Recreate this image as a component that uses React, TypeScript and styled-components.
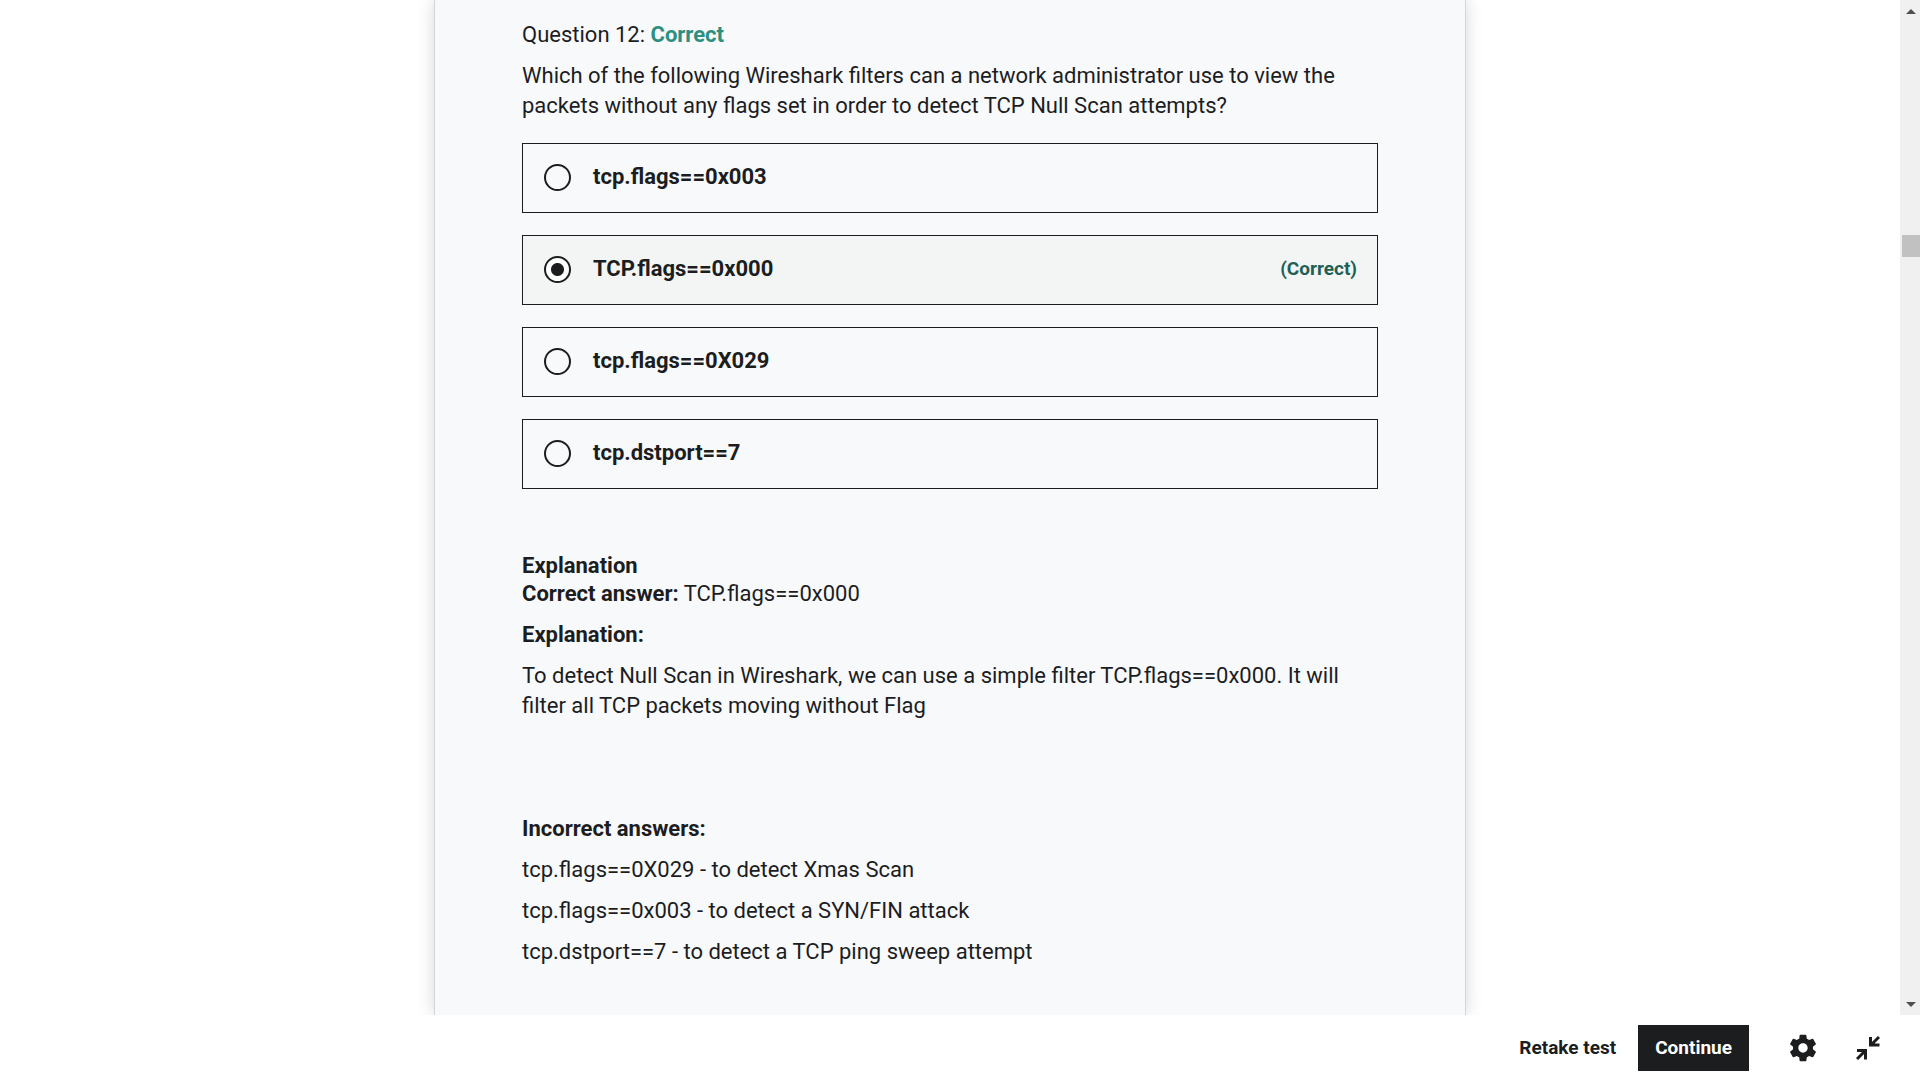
import React, { useState } from "react";
import styled, { createGlobalStyle } from "styled-components";

const ink = "#1c1d1f";

const GlobalStyle = createGlobalStyle`
  *, *::before, *::after { box-sizing: border-box; }
  body { margin: 0; background: #fff; color: ${ink}; font-family: Roboto, "Liberation Sans", sans-serif; }
  button { font: inherit; border: 0; background: none; padding: 0; cursor: pointer; color: inherit; }
`;

const Page = styled.div`
  height: 100vh;
  display: flex;
  flex-direction: column;
`;

const Viewport = styled.div`
  flex: 1;
  min-height: 0;
  display: flex;
  overflow: hidden;
`;

const Content = styled.main`
  flex: 1;
  display: flex;
  justify-content: center;
  align-items: stretch;
`;

const Sheet = styled.article`
  width: 100%;
  max-width: 1032px;
  padding: 20px 87px 0;
  background: #f8f9fb;
  border: solid #d1d7dc;
  border-width: 0 1px;
  box-shadow: 0 0 16px rgba(0, 0, 0, 0.16);
  font-size: 22px;
  line-height: 30px;
`;

const Paragraph = styled.p`
  margin: 0 0 11px;
`;

const Status = styled.strong`
  color: #2b9080;
`;

const Options = styled.fieldset`
  display: grid;
  gap: 22px;
  margin: 22px 0 64px;
  padding: 0;
  border: 0;
  min-width: 0;
`;

const Option = styled.label<{ $correct?: boolean }>`
  display: flex;
  align-items: center;
  gap: 22px;
  height: 70px;
  padding: 0 20px 2px 21px;
  border: 1px solid ${ink};
  background: ${(p) => (p.$correct ? "#f2f5f4" : "transparent")};
  font-weight: 700;
  cursor: pointer;
`;

const Radio = styled.input`
  appearance: none;
  flex: none;
  width: 27px;
  height: 27px;
  margin: 0;
  border: 2px solid ${ink};
  border-radius: 50%;
  &:checked { background: radial-gradient(circle, ${ink} 6px, #fff 7px); }
`;

const OptionText = styled.span`
  flex: 1;
`;

const Badge = styled.span`
  color: #1e6055;
  font-size: 19px;
`;

const Heading = styled.h2`
  margin: 0;
  font-size: inherit;
  line-height: 26px;
`;

const Incorrect = styled.section`
  margin-top: 93px;
`;

const ScrollRail = styled.aside`
  width: 20px;
  display: flex;
  flex-direction: column;
  background: #f0f0f0;
`;

const ScrollButton = styled.button`
  height: 22px;
  display: grid;
  place-items: center end;
`;

const Track = styled.div`
  flex: 1;
  display: flex;
  flex-direction: column;
  align-items: flex-end;
  padding-top: 213px;
`;

const Thumb = styled.div`
  width: 18px;
  height: 22px;
  background: #c1c1c1;
`;

const Footer = styled.footer`
  height: 65px;
  display: flex;
  align-items: center;
  justify-content: flex-end;
  padding-right: 40px;
  font-size: 19px;
  font-weight: 700;
`;

const Continue = styled.button`
  height: 46px;
  margin: 0 38px 0 22px;
  padding: 0 17px;
  background: ${ink};
  color: #fff;
`;

const IconButton = styled.button`
  display: grid;
  & + & { margin-left: 37px; }
`;

const options = ["tcp.flags==0x003", "TCP.flags==0x000", "tcp.flags==0X029", "tcp.dstport==7"];
const correct = 1;

export default function App() {
  const [picked, setPicked] = useState(correct);
  return (
    <Page>
      <GlobalStyle />
      <Viewport>
        <Content>
          <Sheet>
            <Paragraph>Question 12: <Status>Correct</Status></Paragraph>
            <Paragraph id="question">
              Which of the following Wireshark filters can a network administrator use to view the packets without any flags set in order to detect TCP Null Scan attempts?
            </Paragraph>
            <Options aria-labelledby="question">
              {options.map((text, i) => (
                <Option key={text} $correct={i === correct}>
                  <Radio type="radio" name="answer" checked={picked === i} onChange={() => setPicked(i)} />
                  <OptionText>{text}</OptionText>
                  {i === correct && <Badge>(Correct)</Badge>}
                </Option>
              ))}
            </Options>
            <Heading>Explanation</Heading>
            <Paragraph><strong>Correct answer:</strong> TCP.flags==0x000</Paragraph>
            <Paragraph><strong>Explanation:</strong></Paragraph>
            <Paragraph>
              To detect Null Scan in Wireshark, we can use a simple filter TCP.flags==0x000. It will filter all TCP packets moving without Flag
            </Paragraph>
            <Incorrect>
              <Paragraph><strong>Incorrect answers:</strong></Paragraph>
              <Paragraph>tcp.flags==0X029 - to detect Xmas Scan</Paragraph>
              <Paragraph>tcp.flags==0x003 - to detect a SYN/FIN attack</Paragraph>
              <Paragraph>tcp.dstport==7 - to detect a TCP ping sweep attempt</Paragraph>
            </Incorrect>
          </Sheet>
        </Content>
        <ScrollRail>
          <ScrollButton aria-label="Scroll up">
            <svg width="18" height="5" viewBox="0 0 18 5" fill="#505050"><path d="M4 5 9 0l5 5z" /></svg>
          </ScrollButton>
          <Track><Thumb /></Track>
          <ScrollButton aria-label="Scroll down">
            <svg width="18" height="5" viewBox="0 0 18 5" fill="#505050"><path d="M4 0l5 5 5-5z" /></svg>
          </ScrollButton>
        </ScrollRail>
      </Viewport>
      <Footer>
        <button>Retake test</button>
        <Continue>Continue</Continue>
        <IconButton aria-label="Settings">
          <svg width="32" height="32" viewBox="0 0 24 24" fill={ink}>
            <path d="M19.43 12.98c.04-.32.07-.64.07-.98s-.03-.66-.07-.98l2.11-1.65c.19-.15.24-.42.12-.64l-2-3.46c-.12-.22-.39-.3-.61-.22l-2.49 1c-.52-.4-1.08-.73-1.69-.98l-.38-2.65C14.46 2.18 14.25 2 14 2h-4c-.25 0-.46.18-.49.42l-.38 2.65c-.61.25-1.17.59-1.69.98l-2.49-1c-.23-.09-.49 0-.61.22l-2 3.46c-.13.22-.07.49.12.64l2.11 1.65c-.04.32-.07.65-.07.98s.03.66.07.98l-2.11 1.65c-.19.15-.24.42-.12.64l2 3.46c.12.22.39.3.61.22l2.49-1c.52.4 1.08.73 1.69.98l.38 2.65c.03.24.24.42.49.42h4c.25 0 .46-.18.49-.42l.38-2.65c.61-.25 1.17-.59 1.69-.98l2.49 1c.23.09.49 0 .61-.22l2-3.46c.12-.22.07-.49-.12-.64l-2.11-1.65zM12 15.500c-1.930 0-3.500-1.570-3.500-3.500s1.570-3.500 3.500-3.500 3.500 1.570 3.500 3.500-1.570 3.500-3.500 3.500z" />
          </svg>
        </IconButton>
        <IconButton aria-label="Exit full screen">
          <svg width="24" height="24" viewBox="0 0 24 24" fill="none" stroke={ink} strokeWidth="3">
            <path d="M23 1l-8 8M14.500 1v8h9M1 23l8-8M1 14.500h8.500v9" />
          </svg>
        </IconButton>
      </Footer>
    </Page>
  );
}
